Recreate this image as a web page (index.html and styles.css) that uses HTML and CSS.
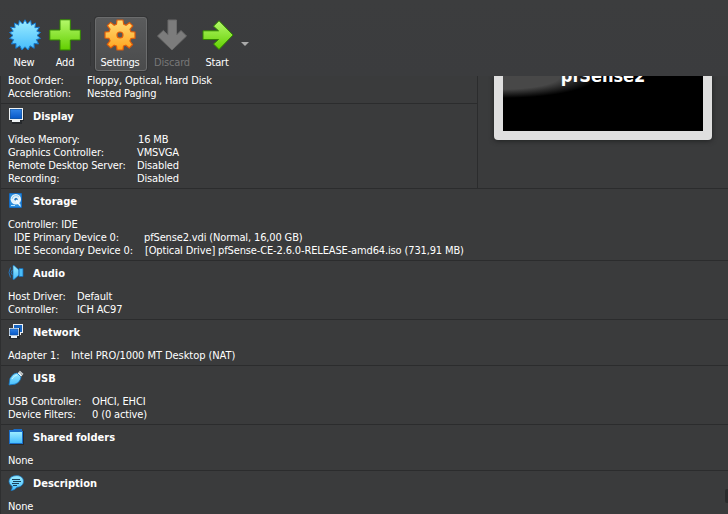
FILE: index.html
```
<!DOCTYPE html>
<html lang="en">
<head>
<meta charset="utf-8">
<title>Virtual machine details</title>
<link rel="stylesheet" href="styles.css">
</head>
<body>
<svg class="defs" width="0" height="0" aria-hidden="true">
  <defs>
    <linearGradient id="blue" x1="0" y1="0" x2="0" y2="1"><stop offset="0" stop-color="#9cecff"/><stop offset="1" stop-color="#45bdfd"/></linearGradient>
    <linearGradient id="green" x1="0" y1="0" x2="0" y2="1"><stop offset="0" stop-color="#b4f86a"/><stop offset="1" stop-color="#62cf00"/></linearGradient>
    <linearGradient id="orange" x1="0" y1="0" x2="0" y2="1"><stop offset="0" stop-color="#ffdd78"/><stop offset="1" stop-color="#ffa31c"/></linearGradient>
    <linearGradient id="screen" x1="0" y1="0" x2="0" y2="1"><stop offset="0" stop-color="#2f82e6"/><stop offset="1" stop-color="#0758c8"/></linearGradient>
  </defs>
</svg>
<div class="window">
  <header class="toolbar">
    <button class="tool new"><svg width="32" height="32" viewBox="0 0 32 32"><path fill="url(#blue)" stroke="#1478cf" stroke-width="1" d="M16 .8L18.3 5L21.7 1.6L22.4 6.2L26.6 4L25.9 8.7L30.4 8.2L27.8 12.2L31.5 13.5L28 16.4L31.5 19.4L27.4 20.6L29.6 25L25 24.5L25.2 29.3L21 26.8L19.2 31L16 27.8L12.8 31L11 26.8L6.8 29.3L7 24.5L2.4 25L4.6 20.6L.5 19.4L4 16.4L.5 13.5L4.2 12.2L1.6 8.2L6.1 8.7L5.4 4L9.6 6.2L10.3 1.6L13.7 5Z"/></svg><span>New</span></button>
    <button class="tool add"><svg width="32" height="32" viewBox="0 0 32 32"><path fill="url(#green)" stroke="#318500" d="M11 .8H21.3V11H31.3V21H21.3V31H11V21H.8V11H11Z"/></svg><span>Add</span></button>
    <i class="rule"></i>
    <button class="tool settings"><svg width="32" height="32" viewBox="0 0 32 32"><path fill="url(#orange)" stroke="#df5c0a" stroke-width="1.2" stroke-linejoin="round" fill-rule="evenodd" d="M13 1H19L19.7 5.2L22 6.3L25.6 3.6L28.8 6.8L26 10.3L27 12.7L31 13V19.2L27 19.5L25.9 22L28.6 25.6L25.2 29L21.8 26.2L19.5 27L19 31H13L12.5 27L10.2 26.2L6.7 28.9L3.2 25.4L6 21.8L5 19.4L1 19V13L5 12.7L6 10.2L3.3 6.7L6.6 3.4L10.2 6.2L12.5 5.2ZM16 13A3 3 0 1 0 16 19A3 3 0 1 0 16 13Z"/></svg><span>Settings</span></button>
    <button class="tool discard" disabled><svg width="32" height="32" viewBox="0 0 32 32"><path fill="#7c7c7c" stroke="#6b6b6b" d="M12 1H20.5V16L25 11.5L30.5 17L16 31L1.5 17L7.3 11.5L12 16Z"/></svg><span>Discard</span></button>
    <button class="tool start"><svg width="32" height="32" viewBox="0 0 32 32"><path fill="url(#green)" stroke="#318500" d="M1 11.8V20.5H16.5L11.5 25L17 30.5L31 16L17 1.7L11.5 7.2L16.5 11.8Z"/></svg><span>Start</span></button>
    <svg class="caret" width="8" height="4" viewBox="0 0 8 4"><path fill="#aaa" d="M0 0H8L4 4Z"/></svg>
  </header>
  <main class="details">
    <div class="top">
      <div class="left">
        <section class="section general">
          <dl class="k79"><dt>Boot Order:</dt><dd>Floppy, Optical, Hard Disk</dd><dt>Acceleration:</dt><dd>Nested Paging</dd></dl>
        </section>
        <section class="section">
          <h2><svg width="17" height="16" viewBox="0 0 17 16"><path fill="#25282b" d="M2 2H16V13H14V16H4V13H2Z"/><path fill="#edf1f3" d="M1 0H15V12H12V14H4V12H1Z"/><path fill="#185394" d="M2 1H14V11H2Z"/><path fill="url(#screen)" d="M2.5 1.5H13.5V10.5H2.5Z"/></svg><span>Display</span></h2>
          <dl class="k129"><dt>Video Memory:</dt><dd class="nudge">16 MB</dd><dt>Graphics Controller:</dt><dd>VMSVGA</dd><dt>Remote Desktop Server:</dt><dd>Disabled</dd><dt>Recording:</dt><dd>Disabled</dd></dl>
        </section>
      </div>
      <aside class="preview"><div class="monitor"><div class="display"><span>pfSense2</span></div></div></aside>
    </div>
    <section class="section">
      <h2><svg width="17" height="16" viewBox="0 0 17 16"><rect x="1" y="0" width="13" height="15" rx="1" fill="#156cc2"/><rect x="2" y="1" width="11" height="13" fill="#298cdd"/><circle cx="7.8" cy="6.3" r="5.2" fill="#e4f3fc"/><path d="M4 6A4 4 0 0 1 11 4" fill="none" stroke="#92c9ed"/><circle cx="8" cy="6.3" r="1.6" fill="#2778bd"/><path d="M8 7L12 12.5" stroke="#f5fbff" stroke-width="1.5"/><path d="M3 12.5H7M12 13H13" stroke="#b9e6ff"/></svg><span>Storage</span></h2>
      <p>Controller: IDE</p>
      <dl class="k130 indent"><dt>IDE Primary Device 0:</dt><dd>pfSense2.vdi (Normal, 16,00 GB)</dd><dt>IDE Secondary Device 0:</dt><dd class="nudge">[Optical Drive] pfSense-CE-2.6.0-RELEASE-amd64.iso (731,91 MB)</dd></dl>
    </section>
    <section class="section">
      <h2><svg width="17" height="16" viewBox="0 0 17 16"><path d="M2.5 2.5Q-.5 7.5 2.5 12.5M4.3 5Q2 7.5 4.3 10" fill="none" stroke="#2577c0"/><path fill="url(#blue)" stroke="#1970b8" stroke-width=".7" d="M5 .5H6L11 5V10L6 14.5H5Z"/><path fill="#4abdf8" stroke="#176bb4" stroke-width=".8" d="M11 3.5H15V11.5H11Z"/></svg><span>Audio</span></h2>
      <dl class="k69"><dt>Host Driver:</dt><dd>Default</dd><dt>Controller:</dt><dd>ICH AC97</dd></dl>
    </section>
    <section class="section">
      <h2><svg width="17" height="16" viewBox="0 0 17 16"><path fill="#eef2f5" d="M5 0H15V9H13V11H7V9H5Z"/><path fill="#1865c1" d="M6 1H14V8H6Z"/><path fill="#24292e" d="M1 4H12V15H1Z"/><path fill="#eef2f5" d="M1 4H11V12H9V14H3V12H1Z"/><path fill="url(#screen)" stroke="#1959a2" stroke-width=".6" d="M2 5H10V11H2Z"/></svg><span>Network</span></h2>
      <dl class="k63"><dt>Adapter 1:</dt><dd>Intel PRO/1000 MT Desktop (NAT)</dd></dl>
    </section>
    <section class="section">
      <h2><svg width="17" height="16" viewBox="0 0 17 16"><path fill="#e8eef0" stroke="#25292b" stroke-width=".6" d="M9 3.5L12 .4L15.7 4L13 7.2Z"/><path d="M12 2.5L13 3.5M13.6 4.3L14.2 4.9" stroke="#333"/><path fill="url(#blue)" stroke="#1779c6" stroke-width=".8" d="M1 15L2 8.5Q5 3 9 3L13 7Q12.5 12 7 14.2Z"/><path d="M4 9Q6 5.5 9 5" fill="none" stroke="#c6f5ff"/></svg><span>USB</span></h2>
      <dl class="k84"><dt>USB Controller:</dt><dd>OHCI, EHCI</dd><dt>Device Filters:</dt><dd>0 (0 active)</dd></dl>
    </section>
    <section class="section">
      <h2><svg width="17" height="16" viewBox="0 0 17 16"><path fill="#25282b" d="M2 2H16V16H2Z"/><path fill="#1b70cb" d="M1 1H5L6 0H14V2H15V15H1Z"/><path fill="url(#blue)" d="M2 3H14V14H2Z"/></svg><span>Shared folders</span></h2>
      <p>None</p>
    </section>
    <section class="section">
      <h2><svg width="17" height="16" viewBox="0 0 17 16"><path fill="url(#blue)" stroke="#1875bd" stroke-width=".8" d="M8.5.6C13 .6 15.5 3.2 15.5 6.5S12.5 12.2 9 12.2Q6.5 15.5 3 15.5Q4.5 13.5 4.2 11.3C-1.5 8 .7.6 8.5.6Z"/><path d="M4 4.5H12M5 6.5H13M4 8.5H11M5 10.5H9" stroke="#19405b"/></svg><span>Description</span></h2>
      <p>None</p>
    </section>
  </main>
  <i class="handle"></i>
</div>
</body>
</html>
```
FILE: styles.css
```
* { box-sizing: border-box; }
body { margin: 0; background: #3a3b3c; color: #fff; font: 11px/13px "DejaVu Sans Condensed", "DejaVu Sans", sans-serif; font-stretch: condensed; }
.defs { position: absolute; }
.window { position: relative; width: 728px; height: 514px; overflow: hidden; background: #3a3b3c; }
.toolbar { height: 76px; display: flex; align-items: flex-start; padding: 17px 0 0 4px; background: linear-gradient(#3c3d3e, #3b3c3e); }
.tool { width: 40px; height: 54px; padding: 2px 0 0; border: 0; background: none; color: inherit; font: inherit; display: flex; flex-direction: column; align-items: center; }
.tool svg { flex: none; margin-bottom: 5px; }
.tool span { white-space: nowrap; letter-spacing: -.2px; }
.new { width: 42px; }
.new span { margin-left: -2px; }
.add { margin-left: -1px; }
.rule { width: 1px; height: 44px; margin: 5px 4px 0 5px; background: #343536; }
.settings { width: 52px; padding: 1px 2px 0 0; border: 1px solid #6b6c6d; border-radius: 3px; background: linear-gradient(#5a5b5c, #4a4b4c); box-shadow: 0 0 0 1px #343536; }
.discard { width: 50px; color: #777; }
.start { width: 42px; }
.start span { margin-left: -2px; }
.caret { margin: 25px 0 0 2px; }
.details { height: 438px; overflow: hidden; border-left: 1px solid #2e2f30; }
.top { display: flex; height: 112px; }
.left { width: 477px; border-right: 1px solid #2b2c2d; }
.section { padding: 0 0 3px 7px; border-top: 1px solid #2b2c2d; }
.general { display: flow-root; height: 27px; border: 0; }
.general dl { margin-top: -2px; }
h2 { display: flex; align-items: center; height: 24px; margin: 0 0 5px; font: bold 11px/14px "DejaVu Sans Condensed", "DejaVu Sans", sans-serif; font-stretch: condensed; }
h2 svg { margin-right: 8px; }
h2 span { padding-top: 2px; }
dl, p, dd { margin: 0; }
dl { display: grid; grid-auto-rows: 13px; white-space: nowrap; letter-spacing: -.14px; }
p { height: 13px; letter-spacing: -.14px; }
.k79 { grid-template-columns: 79px auto; }
.k129 { grid-template-columns: 129px auto; }
.k130 { grid-template-columns: 130px auto; }
.k69 { grid-template-columns: 69px auto; }
.k63 { grid-template-columns: 63px auto; letter-spacing: -.06px; }
.k84 { grid-template-columns: 84px auto; }
.indent { padding-left: 6px; }
.nudge { padding-left: 1px; }
.preview { padding-left: 16px; }
.monitor { width: 218px; height: 64px; padding: 0 9px 9px; border-radius: 0 0 4px 4px; background: #dfdfdf; box-shadow: 0 1px 5px #202122; }
.display { height: 55px; overflow: hidden; text-align: center; background: radial-gradient(ellipse 95px 22px at 0 0, #484848 0, #484848 60%, transparent 100%), #000; }
.display span { display: block; margin-top: -10px; font: bold 18px/20px "DejaVu Sans Condensed", sans-serif; }
.handle { position: absolute; right: 0; top: 489px; width: 3px; height: 14px; border-radius: 2px 0 0 2px; background: #2a2b2c; }
```
